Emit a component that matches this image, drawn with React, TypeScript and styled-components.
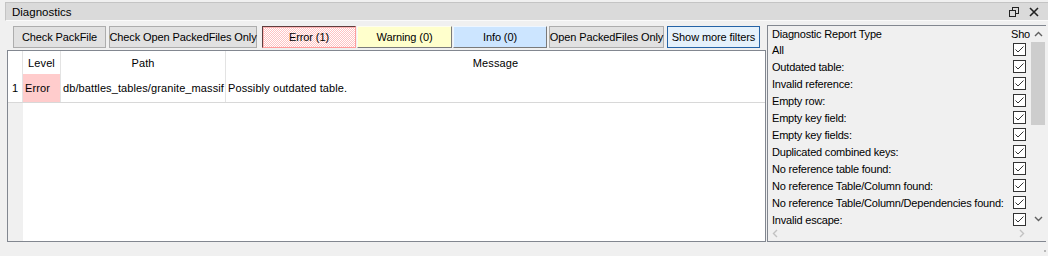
import styled, { createGlobalStyle } from "styled-components";

const Global = createGlobalStyle`
  html, body {
    margin: 0;
    padding: 0;
    background: #f0f0f0;
  }
  body {
    font-family: "Liberation Sans", Arial, sans-serif;
    font-size: 11px;
    color: #000;
  }
`;

const Window = styled.div`
  width: 1048px;
  height: 256px;
  display: flex;
  flex-direction: column;
  background: #f0f0f0;
  overflow: hidden;
`;

const TitleBar = styled.div`
  margin: 2px 0 0 5px;
  height: 19px;
  flex: none;
  box-sizing: border-box;
  display: flex;
  align-items: center;
  padding: 0 4px 0 6px;
  background: #dadada;
  border-top: 1px solid #c4c4c4;
  border-left: 1px solid #c4c4c4;
  border-bottom: 1px solid #fafafa;
`;

const Title = styled.span`
  flex: 1;
  font-size: 11.5px;
  line-height: 16px;
`;

const TitleIcon = styled.span`
  width: 20px;
  height: 16px;
  display: flex;
  align-items: center;
  justify-content: center;
`;

const Body = styled.div`
  flex: none;
  height: 221px;
  box-sizing: border-box;
  display: flex;
  padding: 4px 0 0 7px;
  gap: 1px;
`;

const LeftPane = styled.div`
  width: 759px;
  height: 217px;
  display: flex;
  flex-direction: column;
`;

const Toolbar = styled.div`
  flex: none;
  display: flex;
  height: 24px;
  box-sizing: border-box;
  padding: 1px 0 1px 6px;
`;

type Tone = "plain" | "error" | "warning" | "info" | "focus";

const Button = styled.div<{ $tone?: Tone; $w: number; $gap?: number }>`
  width: ${(p) => p.$w}px;
  height: 22px;
  box-sizing: border-box;
  margin-left: ${(p) => p.$gap ?? 0}px;
  display: flex;
  align-items: center;
  justify-content: center;
  white-space: nowrap;
  font-size: 11px;
  letter-spacing: -0.1px;
  border: 1px solid #adadad;
  background: #e1e1e1;

  ${(p) =>
    p.$tone === "error" &&
    `
    border-color: #5e3e3e #ff9c9c #ff9c9c #5e3e3e;
    box-shadow: inset 1px 1px 0 #ffb4b4;
    background-color: #fff;
    background-image: repeating-conic-gradient(#ffc2c2 0 25%, #fff 0 50%);
    background-size: 2px 2px;
  `}

  ${(p) =>
    p.$tone === "warning" &&
    `
    background: #ffffcc;
    border-color: #fdfdf0 #7a7a7a #7a7a7a #fdfdf0;
  `}

  ${(p) =>
    p.$tone === "info" &&
    `
    background: #cce5ff;
    border-color: #eef6ff #7a7a7a #7a7a7a #eef6ff;
  `}

  ${(p) =>
    p.$tone === "focus" &&
    `
    background: #e5f1fb;
    border-color: #2563a6;
  `}
`;

const Table = styled.div`
  flex: 1;
  min-height: 0;
  display: flex;
  flex-direction: column;
  border: 1px solid #828790;
  background: #fff;
  margin-top: 1px;
`;

const Row = styled.div<{ $h: number; $line?: boolean }>`
  flex: none;
  display: grid;
  grid-template-columns: 15px 38px 165px 1fr;
  height: ${(p) => p.$h}px;
  border-bottom: ${(p) => (p.$line ? "1px solid #d8d8d8" : "none")};
`;

const Cell = styled.div<{ $align?: "left" | "center"; $bg?: string; $last?: boolean }>`
  display: flex;
  align-items: center;
  justify-content: ${(p) => (p.$align === "left" ? "flex-start" : "center")};
  padding-left: ${(p) => (p.$align === "left" ? "2px" : "0")};
  border-right: ${(p) => (p.$last ? "none" : "1px solid #e3e3e3")};
  background: ${(p) => p.$bg ?? "transparent"};
  white-space: nowrap;
  overflow: hidden;
  font-size: 11px;
  letter-spacing: 0.1px;
`;

const Filler = styled.div`
  flex: 1;
  background: linear-gradient(to right, #f0f0f0 15px, #fff 15px);
`;

const RightPane = styled.div`
  width: 279px;
  height: 217px;
  box-sizing: border-box;
  display: flex;
  flex-direction: column;
  border: 1px solid #828790;
  border-right: none;
  background: #f0f0f0;
`;

const TreeArea = styled.div`
  flex: 1;
  display: flex;
  min-height: 0;
`;

const TreeList = styled.div`
  flex: 1;
  overflow: hidden;
`;

const TreeRow = styled.div`
  display: grid;
  grid-template-columns: 243px 1fr;
  height: 17px;
  align-items: center;
  white-space: nowrap;
  font-size: 11px;
  letter-spacing: -0.2px;
`;

const TreeLabel = styled.span`
  padding-left: 4px;
  overflow: hidden;
`;

const TreeHead = styled(TreeRow)`
  height: 15px;
`;

const HeadClip = styled.span`
  overflow: hidden;
  width: 19px;
`;

const CheckBox = styled.span`
  width: 13px;
  height: 13px;
  box-sizing: border-box;
  margin-left: 2px;
  border: 1px solid #333;
  background: #fff;
  display: flex;
  align-items: center;
  justify-content: center;
`;

const VScroll = styled.div`
  width: 16px;
  display: flex;
  flex-direction: column;
  background: #f0f0f0;
`;

const Arrow = styled.div<{ $size: number }>`
  height: ${(p) => p.$size}px;
  width: ${(p) => p.$size}px;
  display: flex;
  align-items: center;
  justify-content: center;
  flex-shrink: 0;
`;

const Thumb = styled.div`
  height: 83px;
  margin: 0 1px;
  background: #cdcdcd;
`;

const Track = styled.div`
  flex: 1;
`;

const HScroll = styled.div`
  flex: none;
  height: 15px;
  display: flex;
  align-items: center;
  padding-right: 17px;
`;

const HTrack = styled.div`
  flex: 1;
`;

const Footer = styled.div`
  flex: 1;
  display: flex;
  justify-content: flex-end;
  align-items: flex-end;
  padding: 0 1px 3px 0;
`;

const reportTypes = [
  "All",
  "Outdated table:",
  "Invalid reference:",
  "Empty row:",
  "Empty key field:",
  "Empty key fields:",
  "Duplicated combined keys:",
  "No reference table found:",
  "No reference Table/Column found:",
  "No reference Table/Column/Dependencies found:",
  "Invalid escape:",
];

function Check() {
  return (
    <CheckBox>
      <svg width="11" height="11" viewBox="0 0 11 11">
        <polyline points="1.5,5.5 4,8 9.5,2.5" fill="none" stroke="#333" strokeWidth="1" />
      </svg>
    </CheckBox>
  );
}

function Chevron({ dir, color }: { dir: "up" | "down" | "left" | "right"; color: string }) {
  const pts = {
    up: "1,6 4.5,2.5 8,6",
    down: "1,3 4.5,6.5 8,3",
    left: "6,1 2.5,4.5 6,8",
    right: "3,1 6.5,4.5 3,8",
  }[dir];
  return (
    <svg width="9" height="9" viewBox="0 0 9 9">
      <polyline points={pts} fill="none" stroke={color} strokeWidth="1.4" />
    </svg>
  );
}

export default function App() {
  return (
    <Window>
      <Global />
      <TitleBar>
        <Title>Diagnostics</Title>
        <TitleIcon>
          <svg width="10" height="10" viewBox="0 0 10 10">
            <rect x="3.5" y="0.5" width="6" height="6" fill="none" stroke="#222" />
            <rect x="0.5" y="3.5" width="6" height="6" fill="#dadada" stroke="#222" />
          </svg>
        </TitleIcon>
        <TitleIcon>
          <svg width="10" height="10" viewBox="0 0 10 10">
            <path d="M1 1 L9 9 M9 1 L1 9" stroke="#222" strokeWidth="1.6" />
          </svg>
        </TitleIcon>
      </TitleBar>

      <Body>
        <LeftPane>
          <Toolbar>
            <Button $w={93}>Check PackFile</Button>
            <Button $w={148} $gap={3}>Check Open PackedFiles Only</Button>
            <Button $w={94} $gap={5} $tone="error">Error (1)</Button>
            <Button $w={95} $gap={1} $tone="warning">Warning (0)</Button>
            <Button $w={94} $gap={1} $tone="info">Info (0)</Button>
            <Button $w={115} $gap={2}>Open PackedFiles Only</Button>
            <Button $w={93} $gap={3} $tone="focus">Show more filters</Button>
          </Toolbar>

          <Table>
            <Row $h={23}>
              <Cell />
              <Cell>Level</Cell>
              <Cell>Path</Cell>
              <Cell $last>Message</Cell>
            </Row>
            <Row $h={28} $line>
              <Cell>1</Cell>
              <Cell $align="left" $bg="#ffcccc">Error</Cell>
              <Cell $align="left">db/battles_tables/granite_massif</Cell>
              <Cell $align="left" $last>Possibly outdated table.</Cell>
            </Row>
            <Filler />
          </Table>
        </LeftPane>

        <RightPane>
          <TreeArea>
            <TreeList>
              <TreeHead>
                <TreeLabel>Diagnostic Report Type</TreeLabel>
                <HeadClip>Sho</HeadClip>
              </TreeHead>
              {reportTypes.map((label) => (
                <TreeRow key={label}>
                  <TreeLabel>{label}</TreeLabel>
                  <Check />
                </TreeRow>
              ))}
            </TreeList>
            <VScroll>
              <Arrow $size={16}>
                <Chevron dir="up" color="#606060" />
              </Arrow>
              <Thumb />
              <Track />
              <Arrow $size={16}>
                <Chevron dir="down" color="#606060" />
              </Arrow>
            </VScroll>
          </TreeArea>
          <HScroll>
            <Arrow $size={15}>
              <Chevron dir="left" color="#c2c2c2" />
            </Arrow>
            <HTrack />
            <Arrow $size={15}>
              <Chevron dir="right" color="#c2c2c2" />
            </Arrow>
          </HScroll>
        </RightPane>
      </Body>

      <Footer>
        <svg width="4" height="4" viewBox="0 0 4 4">
          <rect x="1" y="1" width="2" height="2" fill="#b8b8b8" />
        </svg>
      </Footer>
    </Window>
  );
}
